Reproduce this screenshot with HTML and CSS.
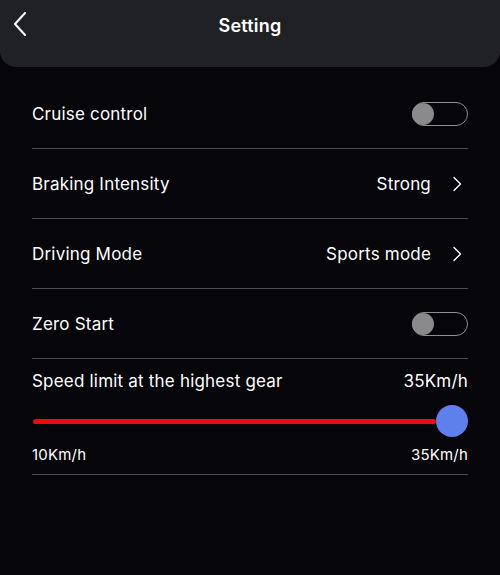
FILE: index.html
```html
<!DOCTYPE html>
<html lang="en">

<head>
    <meta charset="UTF-8">
    <meta name="viewport" content="width=device-width, initial-scale=1.0">
    <title>Setting</title>
    <link rel="stylesheet" href="styles.css">
</head>

<body>
    <header class="top-bar">
        <svg class="back" width="14" height="24" viewBox="0 0 14 24">
            <path d="M12 1 L2 12 L12 23" fill="none" stroke="#fff" stroke-width="2" stroke-linecap="round" stroke-linejoin="round"/>
        </svg>
        <h1>Setting</h1>
    </header>

    <main class="settings">
        <div class="row">
            <span class="label">Cruise control</span>
            <span class="switch"><span class="knob"></span></span>
        </div>
        <div class="row">
            <span class="label">Braking Intensity</span>
            <span class="value">Strong
                <svg class="arrow" width="10" height="16" viewBox="0 0 10 16">
                    <path d="M2 1.5 L8.5 8 L2 14.5" fill="none" stroke="#fff" stroke-width="1.4" stroke-linecap="round" stroke-linejoin="round"/>
                </svg>
            </span>
        </div>
        <div class="row">
            <span class="label">Driving Mode</span>
            <span class="value">Sports mode
                <svg class="arrow" width="10" height="16" viewBox="0 0 10 16">
                    <path d="M2 1.5 L8.5 8 L2 14.5" fill="none" stroke="#fff" stroke-width="1.4" stroke-linecap="round" stroke-linejoin="round"/>
                </svg>
            </span>
        </div>
        <div class="row">
            <span class="label">Zero Start</span>
            <span class="switch"><span class="knob"></span></span>
        </div>
        <div class="speed">
            <div class="speed-head">
                <span class="label">Speed limit at the highest gear</span>
                <span class="current">35Km/h</span>
            </div>
            <div class="slider">
                <div class="track"></div>
                <div class="thumb"></div>
            </div>
            <div class="speed-range">
                <span>10Km/h</span>
                <span>35Km/h</span>
            </div>
        </div>
    </main>
</body>

</html>
```

FILE: styles.css
```css
body {
    font-family: Inter, "Noto Sans", sans-serif;
    background-color: #05050a;
    color: #fff;
    margin: 0;
}

.top-bar {
    height: 67px;
    background: #202125;
    border-radius: 0 0 16px 16px;
    display: flex;
    align-items: flex-start;
    justify-content: center;
    position: relative;
}

.top-bar h1 {
    margin: 15px 0 0;
    font-size: 18px;
    font-weight: 600;
    line-height: 22px;
    letter-spacing: 0.2px;
}

.back {
    position: absolute;
    left: 13px;
    top: 12px;
}

.settings {
    padding: 12px 32px 0;
}

.row {
    height: 69px;
    display: flex;
    align-items: center;
    justify-content: space-between;
    border-bottom: 1px solid #4a4a4f;
    font-size: 17px;
    letter-spacing: 0.2px;
}

.value {
    display: flex;
    align-items: center;
    gap: 21px;
}

.arrow {
    margin-right: 6px;
}

.switch {
    width: 54px;
    height: 22px;
    border: 1px solid #8e8e92;
    border-radius: 12px;
    display: flex;
    align-items: center;
}

.knob {
    width: 22px;
    height: 22px;
    border-radius: 50%;
    background: #8a8a8c;
    margin-left: -1px;
}

.speed {
    padding-top: 12px;
    padding-bottom: 10px;
    border-bottom: 1px solid #4a4a4f;
    font-size: 17px;
    letter-spacing: 0.2px;
}

.speed-head,
.speed-range {
    display: flex;
    justify-content: space-between;
}

.speed-range {
    font-size: 15px;
    line-height: 18px;
}

.slider {
    height: 32px;
    margin: 14px 0 9px;
    display: flex;
    align-items: center;
}

.track {
    flex: 1;
    height: 5px;
    border-radius: 3px;
    background: #ee0a0a;
    margin-left: 1px;
}

.thumb {
    width: 32px;
    height: 32px;
    border-radius: 50%;
    background: #5e80ec;
}
```
